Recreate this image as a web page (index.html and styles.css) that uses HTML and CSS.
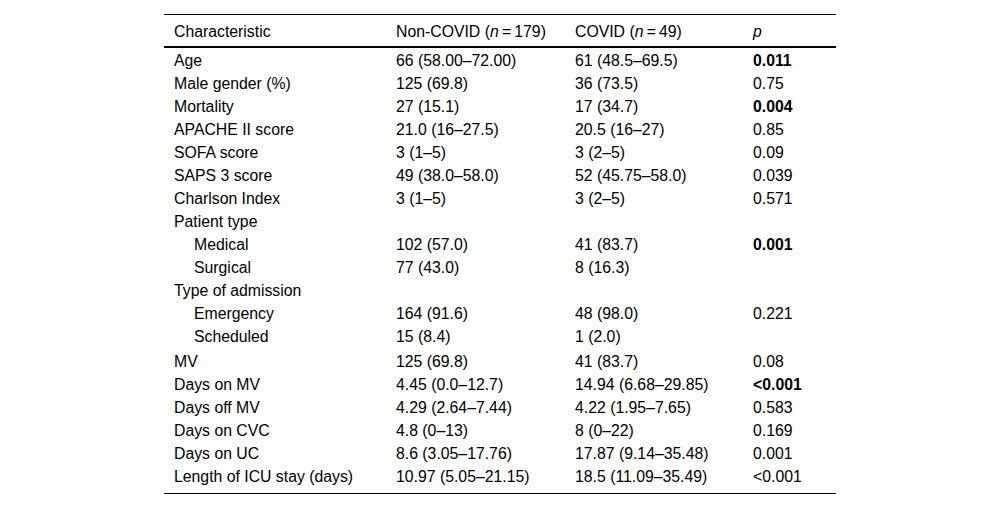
FILE: index.html
```html
<!DOCTYPE html>
<html>
<head>
<meta charset="utf-8">
<link rel="stylesheet" href="styles.css">
</head>
<body>
<table class="data">
  <colgroup>
    <col class="c1"><col class="c2"><col class="c3"><col class="c4">
  </colgroup>
  <thead>
    <tr>
      <th>Characteristic</th>
      <th>Non-COVID (<i>n</i>&#8201;=&#8201;179)</th>
      <th>COVID (<i>n</i>&#8201;=&#8201;49)</th>
      <th><i>p</i></th>
    </tr>
  </thead>
  <tbody>
    <tr><td>Age</td><td>66 (58.00–72.00)</td><td>61 (48.5–69.5)</td><td><b>0.011</b></td></tr>
    <tr><td>Male gender (%)</td><td>125 (69.8)</td><td>36 (73.5)</td><td>0.75</td></tr>
    <tr><td>Mortality</td><td>27 (15.1)</td><td>17 (34.7)</td><td><b>0.004</b></td></tr>
    <tr><td>APACHE II score</td><td>21.0 (16–27.5)</td><td>20.5 (16–27)</td><td>0.85</td></tr>
    <tr><td>SOFA score</td><td>3 (1–5)</td><td>3 (2–5)</td><td>0.09</td></tr>
    <tr><td>SAPS 3 score</td><td>49 (38.0–58.0)</td><td>52 (45.75–58.0)</td><td>0.039</td></tr>
    <tr><td>Charlson Index</td><td>3 (1–5)</td><td>3 (2–5)</td><td>0.571</td></tr>
    <tr><td>Patient type</td><td></td><td></td><td></td></tr>
    <tr><td class="sub">Medical</td><td>102 (57.0)</td><td>41 (83.7)</td><td><b>0.001</b></td></tr>
    <tr><td class="sub">Surgical</td><td>77 (43.0)</td><td>8 (16.3)</td><td></td></tr>
    <tr><td>Type of admission</td><td></td><td></td><td></td></tr>
    <tr><td class="sub">Emergency</td><td>164 (91.6)</td><td>48 (98.0)</td><td>0.221</td></tr>
    <tr><td class="sub">Scheduled</td><td>15 (8.4)</td><td>1 (2.0)</td><td></td></tr>
    <tr class="gap"><td>MV</td><td>125 (69.8)</td><td>41 (83.7)</td><td>0.08</td></tr>
    <tr><td>Days on MV</td><td>4.45 (0.0–12.7)</td><td>14.94 (6.68–29.85)</td><td><b>&lt;0.001</b></td></tr>
    <tr><td>Days off MV</td><td>4.29 (2.64–7.44)</td><td>4.22 (1.95–7.65)</td><td>0.583</td></tr>
    <tr><td>Days on CVC</td><td>4.8 (0–13)</td><td>8 (0–22)</td><td>0.169</td></tr>
    <tr><td>Days on UC</td><td>8.6 (3.05–17.76)</td><td>17.87 (9.14–35.48)</td><td>0.001</td></tr>
    <tr class="last"><td>Length of ICU stay (days)</td><td>10.97 (5.05–21.15)</td><td>18.5 (11.09–35.49)</td><td>&lt;0.001</td></tr>
  </tbody>
</table>
</body>
</html>
```

FILE: styles.css
```css
html, body {
  margin: 0;
  padding: 0;
  background: #fff;
}
body {
  font-family: "Liberation Sans", Arial, sans-serif;
  font-size: 15.8px;
  line-height: 18px;
  color: #000;
}
.data {
  width: 672px;
  margin: 14px auto 0;
  border-collapse: collapse;
  table-layout: fixed;
  border-top: 1px solid #000;
  border-bottom: 1px solid #000;
}
.c1 { width: 222px; }
.c2 { width: 179px; }
.c3 { width: 178px; }
.c4 { width: 93px; }
.data th {
  font-weight: normal;
  text-align: left;
  padding: 8px 10px 5px;
  border-bottom: 2px solid #000;
  white-space: nowrap;
}
.data td {
  padding: 4px 10px 1px;
  text-align: left;
  vertical-align: top;
  white-space: nowrap;
}
.data td.sub {
  padding-left: 30px;
}
.data tr.gap td {
  padding-top: 6px;
}
.data tr.last td {
  padding-bottom: 7px;
}
```
